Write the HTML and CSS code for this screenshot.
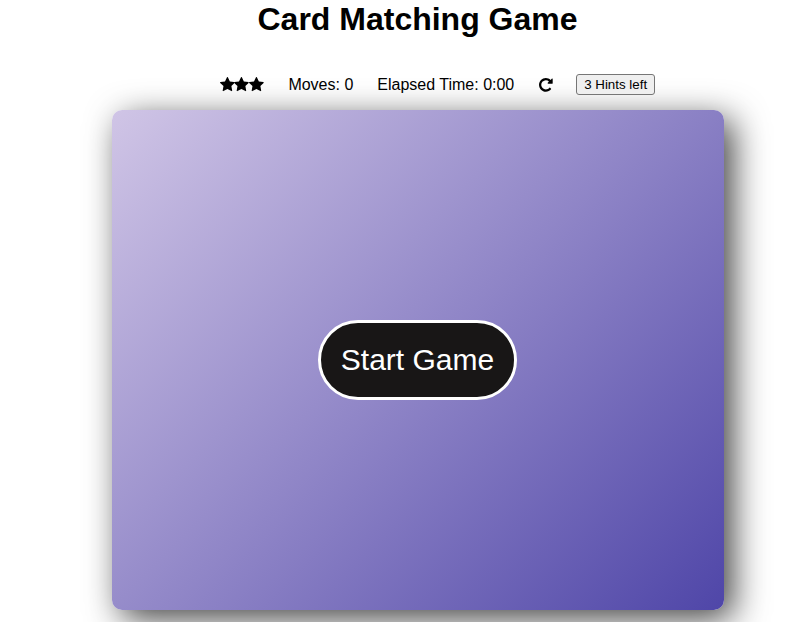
FILE: index.html
```html
<!DOCTYPE html>
<html lang="en">
<head>
<meta charset="utf-8">
<title>Card Matching Game</title>
<link rel="stylesheet" href="styles.css">
</head>
<body>
<svg class="defs" aria-hidden="true">
<symbol id="star" viewBox="0 0 1664 1664"><path d="M1664 615q0 22-26 48l-363 354 86 500q1 7 1 20 0 21-10.500 35.500t-30.500 14.500q-19 0-40-12l-449-236-449 236q-22 12-40 12-21 0-31.500-14.500t-10.500-35.500q0-6 2-20l86-500-364-354q-25-27-25-48 0-37 56-46l502-73 225-455q19-41 49-41t49 41l225 455 502 73q56 9 56 46z"/></symbol>
</svg>
<main class="game">
<h1>Card Matching Game</h1>
<section class="stats">
<span class="stars"><svg><use href="#star"/></svg><svg><use href="#star"/></svg><svg><use href="#star"/></svg></span>
<span class="moves">Moves: 0</span>
<span class="time">Elapsed Time: 0:00</span>
<svg class="restart" viewBox="0 0 1536 1536"><path d="M1536 128v448q0 26-19 45t-45 19h-448q-42 0-59-40-17-39 14-69l138-138q-148-137-349-137-104 0-198.500 40.500t-163.500 109.500-109.500 163.500-40.500 198.500 40.500 198.500 109.500 163.500 163.500 109.500 198.500 40.500q119 0 225-52t179-147q7-10 23-12 15 0 25 9l137 138q9 8 9.500 20.500t-7.500 22.500q-109 132-264 204.500t-327 72.500q-156 0-298-61t-245-164-164-245-61-298 61-298 164-245 245-164 298-61q147 0 284.500 55.500t244.500 156.500l130-129q29-31 70-14 39 17 39 59z"/></svg>
<button class="hints">3 Hints left</button>
</section>
<section class="deck"><button class="start">Start Game</button></section>
</main>
</body>
</html>
```
FILE: styles.css
```css
* { box-sizing: border-box; }
body {
  margin: 0;
  height: 622px;
  overflow: hidden;
  background: #fff;
  color: #000;
  font: 16px "Liberation Sans", Arial, sans-serif;
}
.defs { display: none; }
.game {
  width: 612px;
  margin-left: 112px;
}
h1 {
  margin: 0;
  height: 74px;
  padding-right: 1px;
  font-size: 32px;
  line-height: 38px;
  text-align: center;
}
.stats {
  display: flex;
  align-items: center;
  height: 21px;
  margin: 0 0 15px 107.5px;
}
.stars { display: flex; margin-right: 24.3px; }
.stars svg { width: 14.86px; height: 14.86px; }
.moves { margin-right: 24px; }
.time { margin-right: 24.3px; }
.restart {
  width: 13.7px;
  height: 13.7px;
  margin-right: 23.9px;
  overflow: visible;
}
.hints {
  width: 79px;
  height: 21px;
  padding: 0;
  border: 1px solid #767676;
  border-radius: 3px;
  background: #efefef;
  color: #000;
  font: 13.333px "Liberation Sans", Arial, sans-serif;
}
.deck {
  display: flex;
  align-items: center;
  justify-content: center;
  height: 500px;
  padding-right: 1px;
  border-radius: 10px;
  background: linear-gradient(135deg, #d0c5e6, #4f46a8);
  box-shadow: 9px 9px 34px rgba(0, 0, 0, .74);
}
.start {
  width: 199px;
  height: 80px;
  padding: 0;
  border: 3px solid #fff;
  border-radius: 40px;
  background: #181616;
  color: #fff;
  font: 30px "Liberation Sans", Arial, sans-serif;
}
```
